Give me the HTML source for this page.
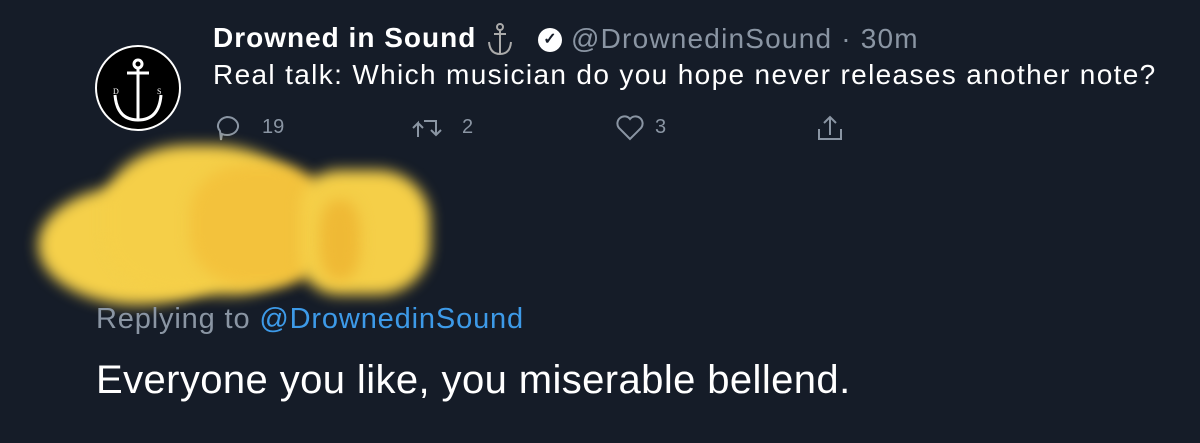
<!DOCTYPE html>
<html><head><style>
body{margin:0;width:1200px;height:443px;background:#151c28;overflow:hidden;position:relative;font-family:"Liberation Sans",sans-serif;color:#fff}
.a{position:absolute;white-space:nowrap}
.blob{position:absolute;filter:blur(7px)}
</style></head><body>
<svg class="a" style="left:95px;top:45px" width="86" height="86" viewBox="0 0 86 86">
<circle cx="43" cy="43" r="42" fill="#000" stroke="#fff" stroke-width="2"/>
<circle cx="43" cy="19" r="4" fill="none" stroke="#fff" stroke-width="3"/>
<line x1="32" y1="28" x2="54" y2="28" stroke="#fff" stroke-width="3"/>
<line x1="43" y1="23" x2="43" y2="75" stroke="#fff" stroke-width="3"/>
<path d="M20 50 Q22 75 43 75 Q64 75 66 50" fill="none" stroke="#fff" stroke-width="3"/>
<text x="18" y="49" font-size="8" fill="#fff" font-family="Liberation Serif">D</text>
<text x="62" y="49" font-size="8" fill="#fff" font-family="Liberation Serif">S</text>
</svg>
<div class="a" style="left:213px;top:22px;font-size:28px;font-weight:bold;letter-spacing:1px">Drowned in Sound</div>
<svg class="a" style="left:485px;top:22px" width="30" height="34" fill="none" stroke="#aaa" stroke-width="2"><circle cx="15" cy="5" r="3"/><path d="M15 8v24M9 12h12M4 20q1 12 11 12q10 0 11-12"/></svg>
<div class="a" style="left:538px;top:28px;width:24px;height:24px;border-radius:50%;background:#fff;color:#151c28;font-size:16px;font-weight:bold;text-align:center;line-height:24px">✓</div>
<div class="a" style="left:571px;top:23px;font-size:28px;color:#8a95a3;letter-spacing:1.2px">@DrownedinSound · 30m</div>
<div class="a" style="left:213px;top:59px;font-size:28px;letter-spacing:1.35px">Real talk: Which musician do you hope never releases another note?</div>
<svg class="a" style="left:214px;top:113px" width="640" height="30" fill="none" stroke="#8a95a3" stroke-width="2">
<path d="M13 4a11 9 0 1 1-5 17l-1 6-1-9a11 9 0 0 1 7-14z"/>
<path d="M204 24V10l-5 5m5-5 5 5M210 8h12v14m-5-5 5 5 5-5"/>
<path d="M416 26l-11-11a6.5 6.5 0 0 1 11-9a6.5 6.5 0 0 1 11 9z"/>
<path d="M616 4v18M610 10l6-6 6 6M605 16v10h22v-10"/>
</svg>
<div class="a" style="left:262px;top:116px;font-size:20px;color:#8a95a3">19</div>
<div class="a" style="left:462px;top:116px;font-size:20px;color:#8a95a3">2</div>
<div class="a" style="left:655px;top:116px;font-size:20px;color:#8a95a3">3</div>
<div class="blob" style="left:38px;top:185px;width:200px;height:120px;background:#f5d04a;border-radius:50% 40% 50% 50%"></div>
<div class="blob" style="left:105px;top:145px;width:210px;height:150px;background:#f5cf48;border-radius:40% 50% 40% 40%"></div>
<div class="blob" style="left:190px;top:165px;width:140px;height:120px;background:#f3c23c;border-radius:40%"></div>
<div class="blob" style="left:300px;top:170px;width:130px;height:125px;background:#f5cf48;border-radius:30% 40% 40% 30%"></div>
<div class="blob" style="left:320px;top:200px;width:40px;height:80px;background:#efb935;border-radius:40%"></div>
<div class="a" style="left:96px;top:303px;font-size:29px;color:#8a95a3;letter-spacing:0.85px">Replying to <span style="color:#3d9ae8">@DrownedinSound</span></div>
<div class="a" style="left:96px;top:358px;font-size:40px;letter-spacing:0.4px">Everyone you like, you miserable bellend.</div>
</body></html>
